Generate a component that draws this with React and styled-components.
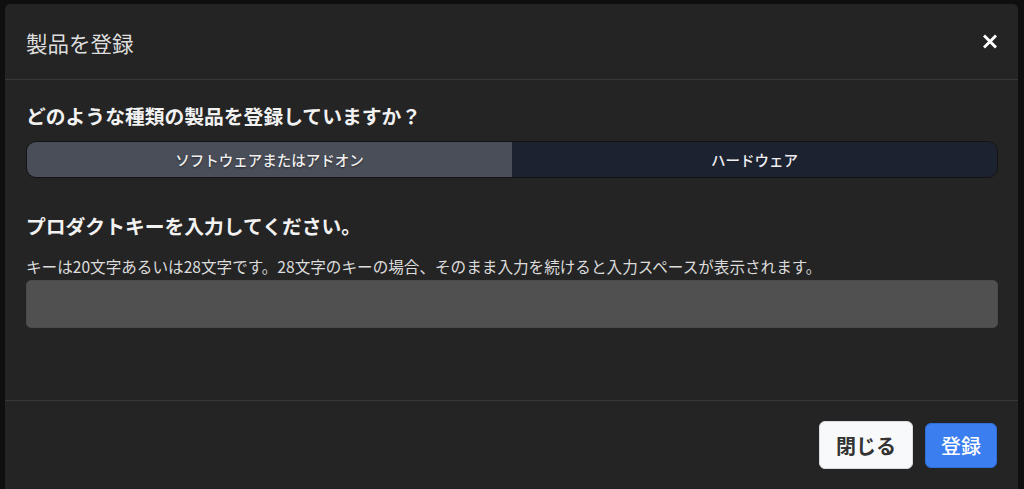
import React, { useState } from 'react';
import styled, { createGlobalStyle } from 'styled-components';

const GlobalStyle = createGlobalStyle`
  html, body {
    margin: 0;
    padding: 0;
    background: #0f0f0f;
    font-family: "Noto Sans CJK JP", "Noto Sans", sans-serif;
  }
  * { box-sizing: border-box; }
`;

const Page = styled.div`
  width: 1024px;
  height: 489px;
  overflow: hidden;
  padding: 4px 6px 0 5px;
  background: #0f0f0f;
`;

const Modal = styled.div`
  background: #242424;
  border-radius: 5px;
  height: 520px;
  display: flex;
  flex-direction: column;
`;

const Header = styled.div`
  height: 76px;
  flex: none;
  display: flex;
  align-items: center;
  justify-content: space-between;
  padding: 0 21px;
  border-bottom: 1px solid #383838;
`;

const Title = styled.h1`
  margin: 0;
  font-size: 21.5px;
  font-weight: 400;
  color: #dedede;
  line-height: 1;
  padding-top: 2px;
`;

const CloseButton = styled.button`
  border: none;
  background: none;
  padding: 0;
  width: 14px;
  height: 15px;
  display: flex;
  cursor: pointer;
`;

const Body = styled.div`
  padding: 21px 20px 0 21px;
  height: 321px;
  flex: none;
  border-bottom: 1px solid #383838;
  display: flex;
  flex-direction: column;
`;

const Heading = styled.h2`
  margin: 0;
  font-size: 19.8px;
  font-weight: 700;
  line-height: 29px;
  color: #f2f2f2;
`;

const Segmented = styled.div`
  margin-top: 11px;
  height: 37px;
  display: flex;
  border-radius: 10px;
  border: 1px solid #141414;
  overflow: hidden;
`;

const Segment = styled.button`
  flex: 1;
  border: none;
  margin: 0;
  font-family: inherit;
  font-size: 14.5px;
  font-weight: 500;
  color: #f0f0f0;
  background: ${p => (p.$active ? '#4a4e59' : '#1d2230')};
  text-shadow: ${p => (p.$active ? '0 1px 2px rgba(0,0,0,0.5)' : 'none')};
  cursor: pointer;
`;

const KeyHeading = styled(Heading)`
  margin-top: 33px;
`;

const Hint = styled.p`
  margin: 15px 0 0;
  font-size: 15.6px;
  line-height: 23px;
  color: #dcdcdc;
`;

const KeyInput = styled.input`
  margin-top: 2px;
  height: 48px;
  width: 100%;
  border: 1px solid #4a4a4a;
  border-radius: 5px;
  background: #505050;
  color: #fff;
  font-family: inherit;
  font-size: 16px;
  padding: 0 12px;
  outline: none;
`;

const Footer = styled.div`
  display: flex;
  justify-content: flex-end;
  align-items: center;
  gap: 12px;
  padding: 20px 21px 0 0;
`;

const Button = styled.button`
  height: ${p => (p.$primary ? '45px' : '48px')};
  padding: 0 ${p => (p.$primary ? '15px' : '16px')};
  border-radius: 6px;
  border: 1px solid ${p => (p.$primary ? '#2f6fd8' : '#d9dbde')};
  background: ${p => (p.$primary ? '#3b7eef' : '#f8f9fa')};
  color: ${p => (p.$primary ? '#ffffff' : '#333333')};
  font-family: inherit;
  font-size: 20px;
  font-weight: ${p => (p.$primary ? 500 : 700)};
  cursor: pointer;
`;

export default function App() {
  const [kind, setKind] = useState('software');
  return (
    <>
      <GlobalStyle />
      <Page>
        <Modal>
          <Header>
            <Title>製品を登録</Title>
            <CloseButton aria-label="close">
              <svg width="14" height="15" viewBox="0 0 14 15">
                <path d="M2 2.5 L12 12.5 M12 2.5 L2 12.5" stroke="#fff" strokeWidth="3" strokeLinecap="square" />
              </svg>
            </CloseButton>
          </Header>
          <Body>
            <Heading>どのような種類の製品を登録していますか？</Heading>
            <Segmented>
              <Segment $active={kind === 'software'} onClick={() => setKind('software')}>
                ソフトウェアまたはアドオン
              </Segment>
              <Segment $active={kind === 'hardware'} onClick={() => setKind('hardware')}>
                ハードウェア
              </Segment>
            </Segmented>
            <KeyHeading>プロダクトキーを入力してください。</KeyHeading>
            <Hint>キーは20文字あるいは28文字です。28文字のキーの場合、そのまま入力を続けると入力スペースが表示されます。</Hint>
            <KeyInput type="text" />
          </Body>
          <Footer>
            <Button>閉じる</Button>
            <Button $primary>登録</Button>
          </Footer>
        </Modal>
      </Page>
    </>
  );
}
